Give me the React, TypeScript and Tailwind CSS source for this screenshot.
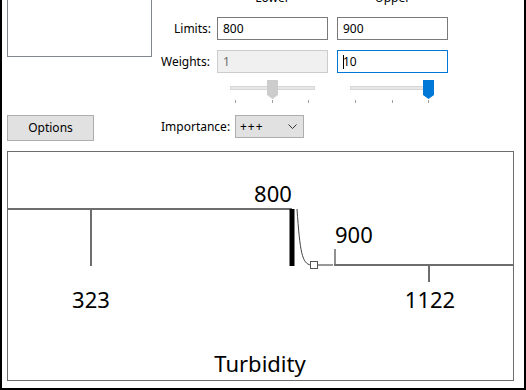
import React from "react";

// Tick offsets (px from slider's left edge) for the 3-step trackbars
const TICKS = [5, 42, 78];

function Trackbar({ width, thumbAt, active }: { width: number; thumbAt: number; active?: boolean }) {
  return (
    <div className="relative h-[24px] shrink-0" style={{ width }}>
      <div className="absolute left-0 right-0 top-[6px] h-[4px] bg-[#e7e7e7] border border-[#d6d6d6]" />
      <svg
        className="absolute top-0"
        style={{ left: thumbAt }}
        width="11"
        height="19"
        viewBox="0 0 11 19"
      >
        <polygon points="0,0 11,0 11,15 5.5,19 0,15" fill={active ? "#0078d7" : "#cccccc"} />
      </svg>
      {TICKS.map((t) => (
        <div key={t} className="absolute top-[20px] w-px h-[3px] bg-[#a0a0a0]" style={{ left: t }} />
      ))}
    </div>
  );
}

export default function App() {
  return (
    <div className="w-[526px] h-[390px] overflow-hidden bg-white border-l-2 border-r-2 border-b-2 border-black font-['Noto_Sans',sans-serif] text-[12px] text-black">
      {/* ── Top controls ── */}
      <div className="flex h-[151px] pl-[5px]">
        {/* Left column */}
        <div className="flex flex-col w-[145px] shrink-0">
          <div className="h-[61px] -mt-[4px] border border-[#828790] bg-white" />
          <button className="mt-[58px] w-[87px] h-[26px] bg-[#e1e1e1] border border-[#adadad] text-[12px] leading-none">
            Options
          </button>
        </div>

        {/* Right column */}
        <div className="flex flex-col ml-[9px]">
          {/* Column headers, clipped by the window edge */}
          <div className="flex h-[16px] -mt-[10px] leading-[16px]">
            <div className="w-[56px]" />
            <div className="w-[111px] text-center">Lower</div>
            <div className="w-[9px]" />
            <div className="w-[111px] text-center">Upper</div>
          </div>

          {/* Limits */}
          <div className="flex items-center mt-[11px] h-[23px]">
            <div className="w-[56px] text-right pr-[6px]">Limits:</div>
            <div className="w-[111px] h-[23px] border border-[#7a7a7a] flex items-center pl-[5px]">800</div>
            <div className="ml-[9px] w-[111px] h-[23px] border border-[#7a7a7a] flex items-center pl-[5px]">900</div>
          </div>

          {/* Weights */}
          <div className="flex items-center mt-[10px] h-[23px]">
            <div className="w-[56px]">Weights:</div>
            <div className="w-[111px] h-[23px] border border-[#cccccc] bg-[#f0f0f0] text-[#6d6d6d] flex items-center pl-[5px]">1</div>
            <div className="ml-[9px] w-[111px] h-[23px] border border-[#0078d7] flex items-center pl-[5px]">
              <span className="w-px h-[14px] bg-black" />
              <span className="-ml-px">10</span>
            </div>
          </div>

          {/* Trackbars */}
          <div className="flex mt-[7px]">
            <div className="ml-[69px]">
              <Trackbar width={85} thumbAt={37} />
            </div>
            <div className="ml-[35px]">
              <Trackbar width={84} thumbAt={73} active />
            </div>
          </div>

          {/* Importance */}
          <div className="flex items-center mt-[11px] h-[23px]">
            <div className="w-[74px]">Importance:</div>
            <div className="w-[69px] h-[23px] bg-[#e1e1e1] border border-[#adadad] flex items-center justify-between pl-[4px] pr-[6px]">
              <span className="tracking-[1px]">+++</span>
              <svg width="9" height="5" viewBox="0 0 9 5">
                <polyline points="0.5,0.5 4.5,4.5 8.5,0.5" fill="none" stroke="#333" strokeWidth="1" />
              </svg>
            </div>
          </div>
        </div>
      </div>

      {/* ── Chart ── */}
      <div className="ml-[5px] w-[507px] h-[230px] border border-[#6d6d6d]">
        <svg width="505" height="228" viewBox="0 0 505 228" fontFamily="Noto Sans, sans-serif">
          {/* high segment */}
          <line x1="0" y1="57" x2="284" y2="57" stroke="#6d6d6d" strokeWidth="2" />
          <line x1="83" y1="57" x2="83" y2="114" stroke="#6d6d6d" strokeWidth="2" />
          <text x="83" y="156" fontSize="22" textAnchor="middle" fill="#000">323</text>

          {/* lower limit */}
          <text x="265" y="50" fontSize="22" textAnchor="middle" fill="#000">800</text>
          <rect x="281.5" y="57" width="5" height="57" fill="#000" />

          {/* transition curve */}
          <path d="M289 57 C 292 100, 294 112, 303 113" fill="none" stroke="#444" strokeWidth="1" />
          <line x1="310" y1="113" x2="325" y2="113" stroke="#333" strokeWidth="1" />
          <rect x="302.5" y="109.5" width="7" height="7" fill="#fff" stroke="#555" strokeWidth="1" />

          {/* upper limit */}
          <line x1="327" y1="97" x2="327" y2="114" stroke="#6d6d6d" strokeWidth="1.5" />
          <text x="327" y="91" fontSize="22" fill="#000">900</text>

          {/* low segment */}
          <line x1="326" y1="113" x2="505" y2="113" stroke="#6d6d6d" strokeWidth="2" />
          <line x1="421" y1="113" x2="421" y2="130" stroke="#6d6d6d" strokeWidth="2" />
          <text x="422" y="156" fontSize="22" textAnchor="middle" fill="#000">1122</text>

          <text x="252" y="220" fontSize="22" textAnchor="middle" fill="#000">Turbidity</text>
        </svg>
      </div>
    </div>
  );
}
